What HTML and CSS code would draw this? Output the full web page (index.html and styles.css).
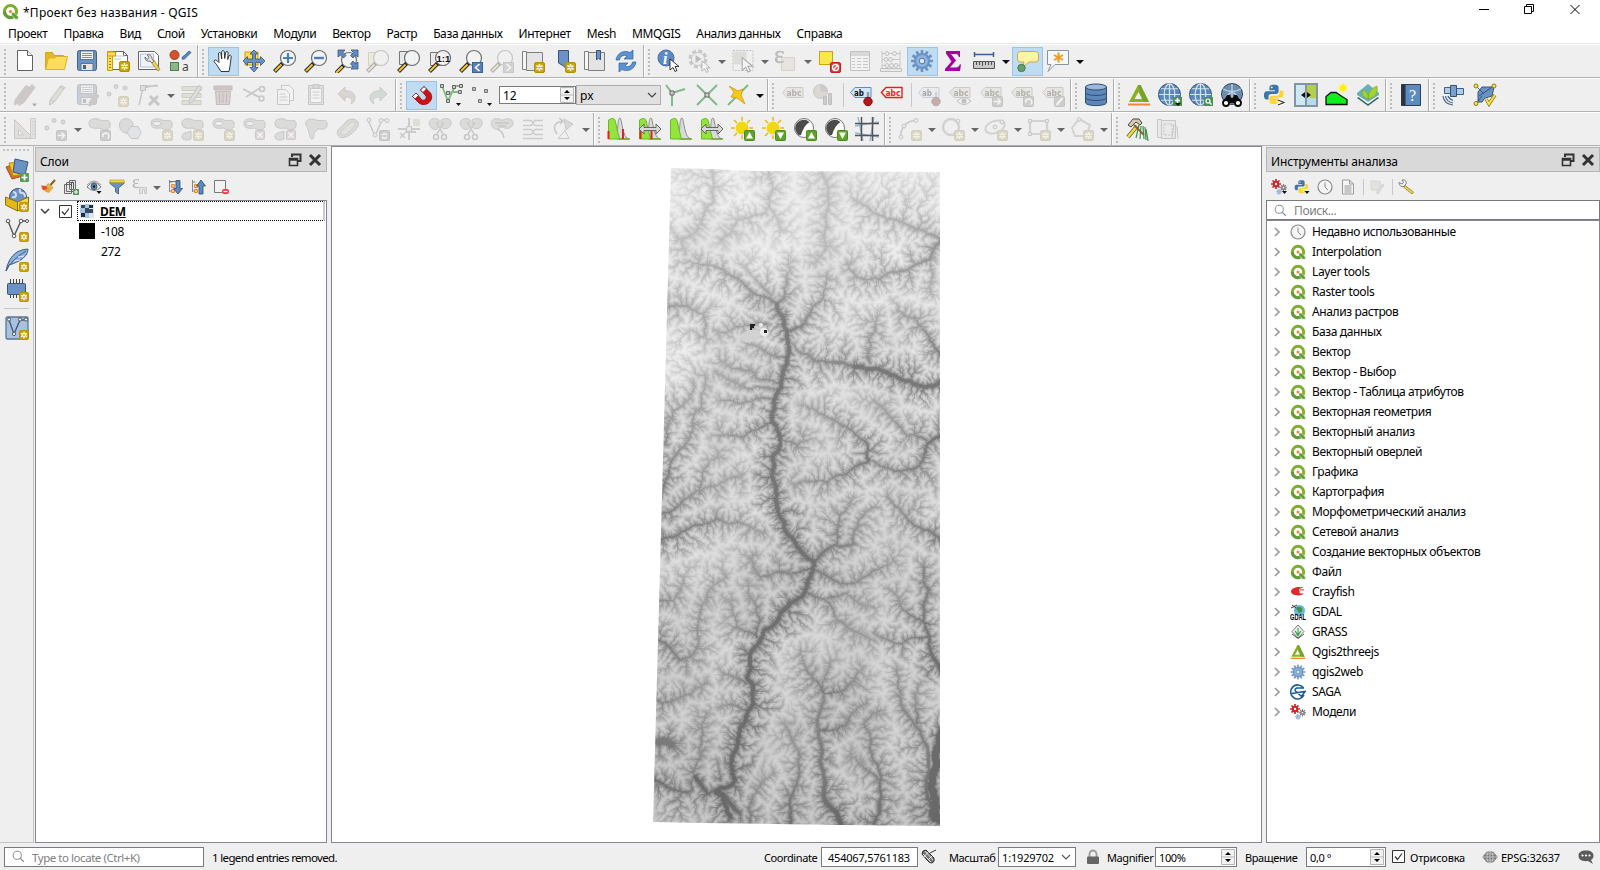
FILE: index.html
```html
<!DOCTYPE html>
<html lang="ru">
<head>
<meta charset="utf-8">
<title>*Проект без названия - QGIS</title>
<link rel="stylesheet" href="styles.css">
</head>
<body>
<svg class="defs">
<symbol id="qgis" viewBox="0 0 16 16"><circle cx="8" cy="8" r="5.700" fill="#fff" stroke="#7fae2c" stroke-width="2.900"/><path d="M2.300 8a5.700 5.700 0 0 0 8 5.200" fill="none" stroke="#619b3a" stroke-width="2.900"/><path d="M9 9h2.300l4 4v2.300h-2.600L9 11.300Z" fill="#5f9e35" stroke="#fff" stroke-width=".5"/><circle cx="8" cy="8" r="1.500" fill="#f08a2c"/></symbol>
<symbol id="new" viewBox="0 0 11 11"><rect x=".5" y=".5" width="10" height="10" rx="1.500" fill="#c9a30a" stroke="#b98f00"/><path d="M5.500 2v7M2.400 3.700l6.200 3.600M8.600 3.700 2.400 7.300" stroke="#fff" stroke-width="1.500"/><circle cx="5.500" cy="5.500" r="1" fill="#c9a30a"/></symbol>
<symbol id="page" viewBox="0 0 24 24"><path d="M4.500 1.500h10l5 5v15h-15Z" fill="#fff" stroke="#636363"/><path d="M14.500 1.500v5h5" fill="#eee" stroke="#636363"/></symbol>
<symbol id="open" viewBox="0 0 24 24"><path d="M1.500 20V3.500h7l2 3h9V20Z" fill="#e7b52a" stroke="#d8a413"/><path d="M1.500 20.500 4.500 9h6l2-1.500h11L20.500 20.500Z" fill="#fcdd5a" stroke="#dcb127"/></symbol>
<symbol id="save" viewBox="0 0 24 24"><rect x="2.500" y="1.500" width="19" height="20" rx="2" fill="#6b92c2" stroke="#40618c"/><rect x="5.500" y="2" width="13" height="8.500" fill="#f4f4f4" stroke="#56789f"/><path d="M7 4.500h10M7 6.500h10M7 8.500h10" stroke="#8c8c8c"/><rect x="6" y="14.500" width="12" height="7" fill="#e6e6e6" stroke="#56789f"/><rect x="8" y="16" width="3" height="4" fill="#3e648f"/></symbol>
<symbol id="layout" viewBox="0 0 24 24"><path d="M2.500 2.500h15l4 4v14h-19Z" fill="#fff" stroke="#636363"/><path d="M17.500 2.500v4h4" fill="none" stroke="#636363"/><path d="M8 7h11M8 10h7" stroke="#b9c6dc"/><path d="M1.500 2.500h5v19h-5Z" fill="#fbdc52" stroke="#c79e10"/><path d="M1.500 3h8v4h-8Z" fill="#fbdc52" stroke="#c79e10"/><path d="M3 9.500h2M3 12.500h2M3 15.500h2M3 18.500h2" stroke="#a58006"/><use href="#new" x="13" y="12" width="11" height="11"/></symbol>
<symbol id="manager" viewBox="0 0 24 24"><path d="M1.500 2.500h16l4 4v14h-20Z" fill="#fff" stroke="#636363"/><path d="M3.500 5h13v13h-13Z" fill="#eff4fb" stroke="#a8c0e0"/><path d="m14 13 7 9 2-1.500-6-9.500Z" fill="#f0d35a" stroke="#9c8125" stroke-width=".8"/><path d="M8 8c0 3 2 5 5 4l2 2 2-2-2-2c0-3-2-5-5-4l2 2-1 2-1 .5Z" fill="#e3e3e3" stroke="#777"/></symbol>
<symbol id="style" viewBox="0 0 24 24"><circle cx="6.500" cy="6" r="4.500" fill="#cf5530" stroke="#a63d1d"/><path d="M14 10c0-3 2-3 3-4l4-4 2 1.500-5 5c-1 1.500-2 2-4 1.500Z" fill="#5a86bd" stroke="#375e90" stroke-width=".8"/><rect x="2.500" y="13.500" width="8" height="8" fill="#8cb58a" stroke="#4c7d4b"/><text x="14" y="22" font-size="12" font-family="Noto Sans" fill="#444">a</text></symbol>
<symbol id="hand" viewBox="0 0 24 24"><path d="M10 22.500 5.500 15.500c-1.700-2-3.300-3-2-4.200 1-.9 3.500 1 4.500 2.200L7.500 5c0-2 2-2 2.400-.4L10.700 10V3c.2-2 2.400-1.900 2.600 0l.4 6.500 1-6c.5-1.700 2.500-1.300 2.400.5L16.700 10.500l1.300-3.500c.8-1.500 2.500-.9 2.200.9L19 17l-1 5.500Z" fill="#fff" stroke="#222" stroke-width=".9"/></symbol>
<symbol id="panto" viewBox="0 0 24 24"><rect x="3" y="3" width="13" height="13" fill="#fbdf43" stroke="#c9a30a"/><path d="m12 1 4 4h-2.500v5h5V7.500L23 12l-4.500 4.500V13.500h-5v5H16L12 23l-4-4.500h2.500v-5h-5v3L1 12l4.500-4.500V10h5V5H8Z" fill="#6b92c2" stroke="#36567f" stroke-width=".8"/></symbol>
<symbol id="lens" viewBox="0 0 24 24"><path d="m10 14-8.500 8.500" stroke="#222" stroke-width="4"/><path d="m8.500 15.500-6.500 6.500" stroke="#f4c62c" stroke-width="2.200"/><circle cx="15" cy="9" r="7.500" fill="#f2f4f4" fill-opacity=".93" stroke="#6f6f6f" stroke-width="1.200"/></symbol>
<symbol id="zin" viewBox="0 0 24 24"><use href="#lens"/><path d="M15 4v10M10 9h10" stroke="#4f7db5" stroke-width="2.200"/></symbol>
<symbol id="zout" viewBox="0 0 24 24"><use href="#lens"/><path d="M10 9h10" stroke="#4f7db5" stroke-width="2.400"/></symbol>
<symbol id="zfull" viewBox="0 0 24 24"><g transform="translate(-1 2)"><use href="#lens" width="24" height="24"/></g><path d="M3 1h7L8 3.500l3 3L8.500 9l-3-3L3 8ZM23 1h-7l2.500 2.500-3 3L18 9l2.500-3L23 8ZM23 20h-7l2.500-2-3-3L18 12l2.500 3 2.500-2Z" fill="#5f8bc0" stroke="#36567f" stroke-width=".8"/></symbol>
<symbol id="zsel" viewBox="0 0 24 24"><rect x="2.500" y="3.500" width="13" height="13" fill="#fbe36a" stroke="#b89a2a"/><use href="#lens"/></symbol>
<symbol id="zlay" viewBox="0 0 24 24"><path d="M2.500 2.500h15v13h-15Z" fill="#e8e8e8" stroke="#777"/><use href="#lens"/></symbol>
<symbol id="znat" viewBox="0 0 24 24"><path d="M2.500 3.500h15v13h-15Z" fill="#e8e8e8" stroke="#777"/><use href="#lens"/><text x="8.500" y="12.500" font-size="9.500" font-weight="700" font-family="Liberation Sans" fill="#111">1:1</text></symbol>
<symbol id="prev" viewBox="0 0 24 24"><use href="#lens"/><rect x="13.500" y="13.500" width="10" height="10" fill="#5482b8" stroke="#3a638f"/><path d="m20.500 15-4 3.500 4 3.500" fill="none" stroke="#fff" stroke-width="1.600"/></symbol>
<symbol id="next" viewBox="0 0 24 24"><use href="#lens"/><rect x="13.500" y="13.500" width="10" height="10" fill="#999" stroke="#777"/><path d="m16.500 15 4 3.500-4 3.500" fill="none" stroke="#fff" stroke-width="1.600"/></symbol>
<symbol id="map" viewBox="0 0 24 24"><path d="M5.500 3.500h16v18h-16Z" fill="#e4e4e4" stroke="#7f7f7f"/><path d="M1.500 2.500h4v18h-4Z" fill="#f6f6f6" stroke="#7f7f7f"/></symbol>
<symbol id="mapnew" viewBox="0 0 24 24"><use href="#map"/><use href="#new" x="13" y="13" width="11" height="11"/></symbol>
<symbol id="bmnew" viewBox="0 0 24 24"><path d="M6.500 1.500h10V22l-5-5-5-3Z" fill="#6b92c2" stroke="#36567f"/><use href="#new" x="13" y="13" width="11" height="11"/></symbol>
<symbol id="bmshow" viewBox="0 0 24 24"><use href="#map"/><path d="M13.500 1.500h4V11l-2-2-2 2Z" fill="#6b92c2" stroke="#36567f"/></symbol>
<symbol id="refresh" viewBox="0 0 24 24"><path d="M2 11C3 4 10 .5 16 3.500L19 1v9h-9l3-3C9 5 6 8 5.500 11ZM22 13c-1 7-8 10.500-14 7.500L5 23v-9h9l-3 3c4 2 7-1 7.500-4Z" fill="#5c92cf" stroke="#2d639f" stroke-width=".7"/></symbol>
<symbol id="cur" viewBox="0 0 12 14"><path d="M1 1v11l3-2.500 2 4 2-1-2-4h4Z" fill="#fff" stroke="#222" stroke-width=".9"/></symbol>
<symbol id="info" viewBox="0 0 24 24"><circle cx="9" cy="9" r="8" fill="#5b8ac4" stroke="#4771a8"/><text x="6" y="15" font-size="16" font-weight="700" font-style="italic" font-family="Liberation Serif" fill="#fff">i</text><use href="#cur" x="12" y="9" width="12" height="14"/></symbol>
<symbol id="cog" viewBox="0 0 24 24"><path d="M12 1v22M2.500 6.500l19 11M2.500 17.500l19-11M6.500 2.500l11 19M17.500 2.500l-11 19M1 12h22" stroke="currentColor" stroke-width="2.600"/><circle cx="12" cy="12" r="7" fill="#8fb3dd" stroke="currentColor" stroke-width="2"/><circle cx="12" cy="12" r="2.800" fill="#dcebfa" stroke="#4f79ad"/></symbol>
<symbol id="action" viewBox="0 0 24 24"><circle cx="10" cy="10" r="8" fill="none" stroke="#777" stroke-width="3" stroke-dasharray="4 2.280"/><circle cx="10" cy="10" r="6.500" fill="#eee" stroke="#777"/><path d="m7.500 6 6 4-6 4Z" fill="#555"/><use href="#cur" x="13" y="11" width="11" height="13"/></symbol>
<symbol id="select" viewBox="0 0 24 24"><rect x="2" y="1.500" width="20" height="20" fill="none" stroke="#666" stroke-dasharray="2 1.300"/><rect x="2.500" y="2.500" width="13" height="13" fill="#c7bb90"/><use href="#cur" x="10" y="7" width="14" height="17"/></symbol>
<symbol id="eps" viewBox="0 0 24 24"><rect x="7.500" y="8.500" width="13" height="13" fill="#ddd2a3" stroke="#a89b6a"/><text x="0" y="14" font-size="25" font-family="Liberation Serif" fill="#555" stroke="#555" stroke-width=".5">ε</text></symbol>
<symbol id="desel" viewBox="0 0 24 24"><rect x="2.500" y="2.500" width="13" height="13" fill="#fde74c" stroke="#c9a30a"/><rect x="13.500" y="13.500" width="10" height="10" rx="1.500" fill="#e03a3a" stroke="#c41d1d"/><circle cx="18.500" cy="18.500" r="3" fill="none" stroke="#fff" stroke-width="1.300"/><path d="m16.500 20.500 4-4" stroke="#fff" stroke-width="1.200"/></symbol>
<symbol id="table" viewBox="0 0 24 24"><path d="M2.500 2.500h19v19h-19Z" fill="#fafafa" stroke="#666"/><path d="M3 3h18v4H3Z" fill="#aaa"/><path d="M4 9.500h3m2 0h4m2 0h5M4 12.500h3m2 0h4m2 0h5M4 15.500h3m2 0h4m2 0h5M4 18.500h3m2 0h4m2 0h5" stroke="#777"/></symbol>
<symbol id="abacus" viewBox="0 0 24 24"><path d="M3 1.500V20M21 1.500V20M3 4.500h18M3 10.500h18M3 16.500h18" fill="none" stroke="#777"/><g fill="#ddd" stroke="#666"><circle cx="8" cy="4.500" r="2"/><circle cx="15.500" cy="4.500" r="2"/><circle cx="7" cy="10.500" r="2"/><circle cx="11.500" cy="10.500" r="2"/><circle cx="8" cy="16.500" r="2"/><circle cx="12.500" cy="16.500" r="2"/><circle cx="17" cy="16.500" r="2"/><path d="M1.500 19.500h21v3h-21Z"/></g></symbol>
<symbol id="sigma" viewBox="0 0 24 24"><path d="M5 2h14v6h-1.200c-.5-2.500-1.500-3-4-3H10l5 6.500L9 18.500h5.500c2.500 0 3.500-.8 4.200-3H20L19 22H4v-2l6.500-7.500L5 4.500Z" fill="#a500a5"/></symbol>
<symbol id="measure" viewBox="0 0 24 24"><path d="M2 5.500h20M2.500 3v5M21.500 3v5" stroke="#3d5f8c" stroke-width="1.500"/><path d="M1.500 12.500h21v7h-21Z" fill="#c9c9c9" stroke="#555"/><path d="M4.500 13v3m3-3v3m3-3v4m3-4v3m3-3v3m3-3v3" stroke="#555"/></symbol>
<symbol id="tip" viewBox="0 0 24 24"><path d="M5.500 2.500h15q3 0 3 3v4.500q0 3-3 3H14l-6 5 1-5H5.500q-3 0-3-3V5.500q0-3 3-3Z" fill="#fff3a6" stroke="#c9a94a"/><circle cx="6.500" cy="19" r="3.700" fill="#65a26b" stroke="#477a4d"/></symbol>
<symbol id="annot" viewBox="0 0 24 24"><path d="M1.500 1.500h21v14H9l-7 7 3-7H1.500Z" fill="#f5f8fc" stroke="#8a949e"/><path d="M12.500 3.500v10M8 6l9 5M17 6l-9 5" stroke="#f39a1b" stroke-width="2"/></symbol>
<symbol id="pencil" viewBox="0 0 24 24"><path d="M17 2.500 21 4.500 10 19.500 5.500 22 6 17Z" fill="#c8b98b" stroke="#777"/><path d="m7 17 3 2M16 4l4 2" stroke="#777"/></symbol>
<symbol id="pencils" viewBox="0 0 24 24"><path d="M13 2.500 17 4.500 6 19.500 1.500 22 2 17Z" fill="#a5776a" stroke="#777"/><path d="m19 1.500 3 3-11 15-5.500 3L7 16Z" fill="#a5776a" stroke="#777"/><path d="m19 20.500h5l-2.500 3Z" fill="#222"/></symbol>
<symbol id="saveedit" viewBox="0 0 24 24"><use href="#save"/><path d="m21 10 3 3-7 9-3 1 .5-4Z" fill="#a5776a" stroke="#777"/></symbol>
<symbol id="dots" viewBox="0 0 24 24"><g fill="#aaa" stroke="#777"><circle cx="3" cy="11" r="2"/><circle cx="10" cy="3.500" r="2"/><circle cx="19" cy="5" r="2"/></g></symbol>
<symbol id="addpt" viewBox="0 0 24 24"><use href="#dots"/><use href="#new" x="12" y="13" width="11" height="11"/></symbol>
<symbol id="vtool" viewBox="0 0 24 24"><path d="M2 22 6 5l14-3M4 3h17" fill="none" stroke="#777" stroke-width="1.500"/><path d="M3.500 2.500h5v5h-5Z" fill="#bbb" stroke="#666"/><path d="m12 22 9-9m-8 0 9 9" stroke="#777" stroke-width="3"/></symbol>
<symbol id="multi" viewBox="0 0 24 24"><path d="M2 3.500h19v4H2Zm0 7h19v4H2Zm0 7h19v4H2Z" fill="#c7be8a" stroke="#8e8751"/><path d="M19 2.500l3 2-9 14-4 2 .5-4Z" fill="#bbb" stroke="#666"/></symbol>
<symbol id="trash" viewBox="0 0 24 24"><path d="M3 3h18v4H3Z" fill="#b86868" stroke="#8a4a4a"/><path d="M4.500 8.500h15l-1 13h-13Z" fill="#ca8e8e" stroke="#8a4a4a"/><path d="M8.500 10v10m3.500-10v10m3.500-10v10" stroke="#8a4a4a"/></symbol>
<symbol id="cut" viewBox="0 0 24 24"><path d="m1 6 16 8M4 14 18 5" stroke="#777" stroke-width="1.600"/><circle cx="20" cy="6" r="2.500" fill="none" stroke="#777" stroke-width="1.500"/><circle cx="19.500" cy="15.500" r="2.500" fill="none" stroke="#777" stroke-width="1.500"/></symbol>
<symbol id="copy" viewBox="0 0 24 24"><path d="M8.500 2.500h8l4 4v11h-12Z" fill="#fafafa" stroke="#777"/><path d="M4.500 6.500h8l4 4v11h-12Z" fill="#fafafa" stroke="#777"/><path d="M6.500 11h6m-6 3h8m-8 3h8" stroke="#888"/></symbol>
<symbol id="paste" viewBox="0 0 24 24"><path d="M4.500 2.500h15v19h-15Z" fill="#c8c0a5" stroke="#777"/><path d="M6.500 5.500h11v14h-11Z" fill="#fff" stroke="#888"/><path d="M9 1.500h6v4H9Z" fill="#aaa" stroke="#777"/><path d="M8.500 9h7m-7 3h7m-7 3h7" stroke="#888"/></symbol>
<symbol id="undo" viewBox="0 0 24 24"><path d="m3 11 7-7v4c11-1 13 9 6 13 2-5 0-7-6-7v4Z" fill="#bba183" stroke="#927a60"/></symbol>
<symbol id="redo" viewBox="0 0 24 24"><path d="m21 11-7-7v4C3 7 1 17 8 21c-2-5 0-7 6-7v4Z" fill="#8fb597" stroke="#6d8f74"/></symbol>
<symbol id="magnet" viewBox="0 0 24 24"><path d="M3.500 13.500 10 20c7 5 16-3 11.500-10L15 3.500 11.500 7l5.500 6c1 2.500-1.500 5-4 4L7 10Z" fill="#d01014" stroke="#8c0b0e" stroke-width=".8"/><path d="M11.500 7 15 3.500 17.500 6 14 9.500ZM3.500 13.500 7 10l2.500 2.500L6 16Z" fill="#fff" stroke="#8c2020" stroke-width=".9"/></symbol>
<symbol id="sv" viewBox="0 0 24 24"><path d="m2 3 6 15 7-15h7M8 10l6-1h8" fill="none" stroke="#80bb87" stroke-width="1.800"/><g fill="#ccc" stroke="#666"><path d="M.5 1.500h3v3h-3Zm12 1h3v3h-3Zm7-1h3v3h-3Zm-13 15h3v3h-3Zm0-8h3v3h-3Zm12-1h3v3h-3Z"/></g><path d="M16 20h5l-2.500 3Z" fill="#111"/></symbol>
<symbol id="sdots" viewBox="0 0 24 24"><g fill="#bbb" stroke="#777"><path d="M1.500 4.500h3v3h-3Zm12 2h3v3h-3Zm-6 10h3v3h-3Z"/></g><path d="M16 20h5l-2.500 3Z" fill="#111"/></symbol>
<symbol id="topo" viewBox="0 0 24 24"><path d="M2 2 8 10l13-4M8 10v13" fill="none" stroke="#80bb87" stroke-width="2"/><path d="M6 8h4v4H6Z" fill="#ccc" stroke="#666"/></symbol>
<symbol id="inter" viewBox="0 0 24 24"><path d="m2 2 20 20M22 2 2 22" stroke="#80bb87" stroke-width="2"/><path d="M10 10h4v4h-4Z" fill="#ccc" stroke="#666"/></symbol>
<symbol id="trace" viewBox="0 0 24 24"><path d="M22 2 2 22" stroke="#80bb87" stroke-width="2"/><path d="m3 3 9 5 5-2-2 6 4 9-8-6-6-1 3-5Z" fill="#f7c91b" stroke="#c99a0a" stroke-width=".8"/></symbol>
<symbol id="abc" viewBox="0 0 24 24"><path d="M1.500 9.500 6 4.500h16v10H6Z" fill="#ded4a5" stroke="#8a8466"/><text x="5.500" y="13" font-size="9" font-weight="700" font-family="DejaVu Sans" fill="#333" textLength="15" lengthAdjust="spacingAndGlyphs">abc</text></symbol>
<symbol id="pie" viewBox="0 0 24 24"><circle cx="8.500" cy="8.500" r="7" fill="#b4ad8c" stroke="#777"/><path d="M8.500 8.500V1.500a7 7 0 0 1 7 7Z" fill="#a77"/><path d="M11.500 13.500h3v8h-3Zm5-3h3v11h-3Z" fill="#789" stroke="#566"/></symbol>
<symbol id="abpin" viewBox="0 0 24 24"><path d="M1.500 9.500 6 4.500h16v10H6Z" fill="#d5e6fb" stroke="#4d92e0"/><text x="5" y="13" font-size="9.500" font-weight="700" font-family="DejaVu Sans" fill="#111" textLength="10" lengthAdjust="spacingAndGlyphs">ab</text><path d="M19 9v7" stroke="#999" stroke-width="2.500"/><circle cx="19" cy="18.500" r="4.200" fill="#b81616" stroke="#7e0c0c"/></symbol>
<symbol id="abcred" viewBox="0 0 24 24"><path d="M1.500 9.500 6 4.500h16v10H6Z" fill="#fff" stroke="#f01818" stroke-width="1.400"/><text x="5.500" y="13" font-size="9" font-weight="700" font-family="DejaVu Sans" fill="#f01818" textLength="15" lengthAdjust="spacingAndGlyphs">abc</text></symbol>
<symbol id="abeye" viewBox="0 0 24 24"><use href="#abc"/><path d="M9 18q7-7 14 0-7 7-14 0Z" fill="#fff" stroke="#555"/><circle cx="16" cy="18" r="2.500" fill="#666"/></symbol>
<symbol id="badge" viewBox="0 0 11 11"><rect x=".5" y=".5" width="10" height="10" rx="1" fill="#8a8a7a" stroke="#6d6d60"/></symbol>
<symbol id="abmove" viewBox="0 0 24 24"><use href="#abc"/><use href="#badge" x="13" y="13" width="11" height="11"/><path d="M14.500 18.500h7m-3-3 3 3-3 3" fill="none" stroke="#fff" stroke-width="1.500"/></symbol>
<symbol id="abrot" viewBox="0 0 24 24"><use href="#abc"/><use href="#badge" x="13" y="13" width="11" height="11"/><path d="M16 20a3 3 0 1 1 4.500 1.500" fill="none" stroke="#fff" stroke-width="1.500"/></symbol>
<symbol id="abedit" viewBox="0 0 24 24"><use href="#abc"/><use href="#badge" x="13" y="13" width="11" height="11"/><path d="m15.500 22 6-7" stroke="#fff" stroke-width="2"/></symbol>
<symbol id="db" viewBox="0 0 24 24"><path d="M1.500 4v16c2 3.500 19 3.500 21 0V4Z" fill="#5d87b8" stroke="#2f4f78"/><ellipse cx="12" cy="4" rx="10.500" ry="3" fill="#9db9da" stroke="#2f4f78"/><path d="M1.500 10c2 3.300 19 3.300 21 0m-21 5c2 3.300 19 3.300 21 0" fill="none" stroke="#2f4f78"/></symbol>
<symbol id="three" viewBox="0 0 24 24"><path d="M11 2h2.500L22 19H2Zm.5 7L7.500 16H15Z" fill="#8ab021" fill-rule="evenodd"/><path d="M11 2h2.500L22 19h-5.500Z" fill="#74a32c"/><path d="M1 21.500h22" stroke="#f0883a" stroke-width="2"/></symbol>
<symbol id="globe" viewBox="0 0 24 24"><circle cx="12" cy="12" r="11.500" fill="#5787bd" stroke="#35567e"/><path d="M12 1v22M1 12h22M3 6h18M3 18h18" stroke="#d6e2ee" stroke-width="1.300"/><ellipse cx="12" cy="12" rx="5.500" ry="11" fill="none" stroke="#d6e2ee" stroke-width="1.300"/></symbol>
<symbol id="globeadd" viewBox="0 0 24 24"><use href="#globe" width="23" height="23"/><rect x="15" y="14" width="9" height="9" fill="#4f8e55"/><path d="M19.500 15v5M17 17.500h5" stroke="#fff" stroke-width="1.600"/><path d="m17 20h6l-3 3Z" fill="#111"/></symbol>
<symbol id="globefind" viewBox="0 0 24 24"><use href="#globe" width="23" height="23"/><rect x="15" y="14" width="9" height="9" fill="#4f8e55"/><circle cx="19" cy="18" r="2" fill="none" stroke="#fff" stroke-width="1.200"/><path d="m20.500 19.500 2 2" stroke="#fff" stroke-width="1.300"/></symbol>
<symbol id="bino" viewBox="0 0 24 24"><circle cx="12" cy="11" r="10.500" fill="#6b8db0" stroke="#29435f"/><path d="M3 6q9 5 18 0M5 16Q12 3 19 16M12 1v13" fill="none" stroke="#bdd0e2" stroke-width="1.400"/><path d="M7 12h3l1 3h2l1-3h3l5 8H2Z" fill="#0b0b0b"/><circle cx="6" cy="20" r="3" fill="#fff" stroke="#0b0b0b" stroke-width="1.800"/><circle cx="18" cy="20" r="3" fill="#fff" stroke="#0b0b0b" stroke-width="1.800"/></symbol>
<symbol id="python" viewBox="0 0 24 24"><path d="M12 2c-4 0-5 1-5 3v3h6v1H4c-2 0-3 2-3 4.500S2 18 4 18h2v-3c0-2 1-3 3-3h5c2 0 3-1 3-3V5c0-2-1-3-5-3Z" fill="#3e74a6"/><path d="M12.500 23c4 0 5-1 5-3v-3h-6v-1h8c2 0 3-2 3-4.500S21.500 8 19.500 8H18v3c0 2-1 3-3 3h-5c-2 0-3 1-3 3v3c0 2 1.500 3 5.500 3Z" fill="#fdd43b"/><circle cx="9.500" cy="4.800" r="1" fill="#fff"/><circle cx="15" cy="20.300" r="1" fill="#fff"/></symbol>
<symbol id="pycon" viewBox="0 0 24 24"><use href="#python" width="22" height="22"/><path d="m15 17 6 2.500-6 2.500" fill="none" stroke="#fff" stroke-width="3"/><path d="m15 17 6 2.500-6 2.500" fill="none" stroke="#333" stroke-width="1.200"/></symbol>
<symbol id="swipe" viewBox="0 0 24 24"><rect x="1" y="1" width="22" height="22" fill="#cfe8f7" stroke="#8594a3" stroke-width="2"/><path d="M13 2h9v20h-9Z" fill="#b7dbe9"/><path d="M13 2h9v13q-8 2-9-6Z" fill="#b4cf4d"/><path d="M12 2v20" stroke="#444" stroke-width="1"/><path d="m7 12 4-3v6Zm10 0-4-3v6Z" fill="#111"/></symbol>
<symbol id="profile" viewBox="0 0 24 24"><path d="M1 21.500v-8l5-4h5l6 4 5 3v5Z" fill="#10ee1c" stroke="#111" stroke-width="1.300"/><circle cx="18" cy="5" r="3" fill="#fff200"/><path d="M18 0v10M13 5h10M14.500 1.500l7 7m0-7-7 7" stroke="#fff200"/></symbol>
<symbol id="leaf" viewBox="0 0 24 24"><path d="m12 7 11 8-11 8L1 15Z" fill="#41616c"/><path d="m12 5 11 8-11 8L1 13Z" fill="#fff"/><path d="m12 1 11 9v2l-11 7-11-7v-2Z" fill="#67b1b6"/><path d="M12 16q-8-3-5-9 6 2 5 9 0-10 9-13 2 11-9 13Z" fill="#a4d233" stroke="#6ea82a" stroke-width=".6"/></symbol>
<symbol id="help" viewBox="0 0 24 24"><path d="M2.500 1.500h19v21h-19Z" fill="#5d8bc0" stroke="#2e3e52"/><path d="M2.500 1.500h4v21h-4Z" fill="#2c3440"/><text x="10" y="18" font-size="16" font-family="Liberation Serif" fill="#fff">?</text></symbol>
<symbol id="sat" viewBox="0 0 24 24"><path d="M2.500 4.500h8v6h-8Zm11 1h8v6h-8Z" fill="#aecbe8" stroke="#3d5f8c"/><path d="M8.500 2.500h6v11h-6Z" fill="#7b9fc9" stroke="#31507a"/><path d="M1 13q1 8 10 9M3.500 13q1 6 7.500 7M6 13q1 3 5 4.500" fill="none" stroke="#46658f" stroke-width="1.200"/></symbol>
<symbol id="topocheck" viewBox="0 0 24 24"><path d="m5 9 4-5h12l-2 9-7 2-3 4H5Z" fill="#6b92c2" stroke="#35567e"/><path d="M3 3l8 8M21 3 6 13M3 21l6-8" fill="none" stroke="#35567e"/><g fill="#fbe24a" stroke="#8a7a10"><circle cx="3" cy="3" r="2"/><circle cx="21" cy="3" r="2"/><circle cx="3" cy="20.500" r="2"/></g><path d="m13 16 3 5 6-9" fill="none" stroke="#8a7a10" stroke-width="3.400"/><path d="m13 16 3 5 6-9" fill="none" stroke="#fbe24a" stroke-width="2"/></symbol>
<symbol id="cad" viewBox="0 0 24 24"><path d="M1.500 2.500v19h19Zm4 10 5 5.500H5.500Z" fill="#ccb8a5" stroke="#8c7b6d" fill-rule="evenodd"/><path d="M17.500 1.500h5v20h-5Z" fill="#d4ccae" stroke="#8c866c"/><path d="M19 5h3m-3 3h3m-3 3h3m-3 3h3m-3 3h3" stroke="#888"/></symbol>
<symbol id="movept" viewBox="0 0 24 24"><use href="#dots"/><use href="#badge" x="12" y="13" width="11" height="11"/><path d="M13.500 18.500h7m-3-3 3 3-3 3" fill="none" stroke="#fff" stroke-width="1.500"/></symbol>
<symbol id="blob" viewBox="0 0 24 24"><path d="M2 6c0-5 8-5 11-3s9-2 10 3c1 6-3 8-8 6-4-2-6 0-9-1-3-.5-4-2-4-5Z" fill="#b5b5aa" stroke="#777"/></symbol>
<symbol id="ring" viewBox="0 0 24 24"><use href="#blob"/><ellipse cx="8" cy="6.500" rx="4" ry="2.200" fill="#efefef" stroke="#777"/></symbol>
<symbol id="rot" viewBox="0 0 24 24"><use href="#blob"/><use href="#badge" x="13" y="13" width="11" height="11"/><path d="M16 20a3 3 0 1 1 4.500 1.500" fill="none" stroke="#fff" stroke-width="1.500"/></symbol>
<symbol id="simpl" viewBox="0 0 24 24"><path d="M1.500 8c0-7 8-8 12-4s0 11-3 12-9-1-9-8Z" fill="#b5b5aa" stroke="#777"/><path d="m13 9.500h7l3 6-3 6h-7l-4-6Z" fill="#c5ccd4" stroke="#777"/></symbol>
<symbol id="ringnew" viewBox="0 0 24 24"><use href="#ring"/><use href="#new" x="13" y="13" width="11" height="11"/></symbol>
<symbol id="partnew" viewBox="0 0 24 24"><use href="#blob"/><path d="M2 20c0-5 5-4 9-6v8c-4 2-9 1-9-2Z" fill="#b5b5aa" stroke="#777"/><use href="#new" x="13" y="13" width="11" height="11"/></symbol>
<symbol id="ringdel" viewBox="0 0 24 24"><use href="#ring"/><rect x="13.500" y="13.500" width="9" height="9" rx="1" fill="#c99" stroke="#a77"/><path d="m15.500 15.500 5 5m0-5-5 5" stroke="#fff" stroke-width="1.500"/></symbol>
<symbol id="partdel" viewBox="0 0 24 24"><use href="#blob"/><path d="M2 20c0-5 5-4 9-6v8c-4 2-9 1-9-2Z" fill="#b5b5aa" stroke="#777"/><rect x="13.500" y="13.500" width="9" height="9" rx="1" fill="#c99" stroke="#a77"/><path d="m15.500 15.500 5 5m0-5-5 5" stroke="#fff" stroke-width="1.500"/></symbol>
<symbol id="reshape" viewBox="0 0 24 24"><path d="M2 8c-2-6 6-7 10-5s10-2 11 3-3 7-7 6-3 3-5 3 0 7-3 7-2-8-6-14Z" fill="#b5b5aa" stroke="#777"/></symbol>
<symbol id="offset" viewBox="0 0 24 24"><path d="M3 18c-3-6 4-7 7-12s11-5 13-1-3 9-7 12-11 6-13 1Z" fill="#b9b29c" stroke="#777"/><path d="M6 17c-1-4 4-5 7-9s6-4 7-2-3 6-6 9-7 4-8 2Z" fill="#c8c6bd" stroke="#888"/></symbol>
<symbol id="vrot" viewBox="0 0 24 24"><path d="m2 3 7 16L16 3h6" fill="none" stroke="#777" stroke-width="1.400"/><g fill="#ddd" stroke="#777"><circle cx="3" cy="3" r="2"/><circle cx="15" cy="3.500" r="2"/><circle cx="21" cy="3.500" r="2"/><circle cx="9" cy="18" r="2"/></g><use href="#badge" x="13" y="13" width="11" height="11"/><path d="M16 18a3 3 0 0 1 5 0m0 2a3 3 0 0 1-5 0" fill="none" stroke="#fff" stroke-width="1.500"/></symbol>
<symbol id="vmulti" viewBox="0 0 24 24"><path d="M12 1v22M1 12h22M8 15h11" fill="none" stroke="#888" stroke-width="2"/><path d="M9.500 9.500h5v5h-5Z" fill="#ddd" stroke="#777"/><path d="M16 2h7v7h-7Z" fill="#c7bb90"/><path d="m3 16 5 5m0-5-5 5" stroke="#a77" stroke-width="1.500"/></symbol>
<symbol id="split" viewBox="0 0 24 24"><path d="M11 3C5-1-1 4 2 9s7 4 9 1ZM13 3c6-3 11-1 10 4s-7 6-10 3Z" fill="#b5b5aa" stroke="#777"/><path d="m8 5 7 12M16 5 9 17" stroke="#888" stroke-width="1.600"/><circle cx="8" cy="20" r="2.500" fill="none" stroke="#777" stroke-width="1.500"/><circle cx="16" cy="20" r="2.500" fill="none" stroke="#777" stroke-width="1.500"/></symbol>
<symbol id="merge" viewBox="0 0 24 24"><path d="M11 3C5-1-1 4 2 9s7 4 9 1h2c4 3 9 1 10-3s-4-7-10-4Z" fill="#b5b5aa" stroke="#777"/><path d="M5 6h14M8 9h8m-9 3q6 2 7 9" fill="none" stroke="#777" stroke-width="1.500"/></symbol>
<symbol id="mattr" viewBox="0 0 24 24"><path d="M2 3.500h8l2 2 2-2h8M2 8.500h8l2-2 2 2h8M2 12.500h8l2 2 2-2h8M2 17.500h8l2-2 2 2h8M2 21.500h20" fill="none" stroke="#888" stroke-width="1.600"/></symbol>
<symbol id="rotpt" viewBox="0 0 24 24"><path d="M5 17Q-2 7 10 4m-3-3 4 3-3 3" fill="none" stroke="#777" stroke-width="1.500"/><path d="m12 2 9 5-7 6Z" fill="#aaa" stroke="#777"/><path d="M6 21.500h11l-4-8Z" fill="none" stroke="#777"/></symbol>
<symbol id="hist" viewBox="0 0 24 24"><path d="M10 22C11 6 11 1 13 1s2 20 9 21Z" fill="#d9d9d9" stroke="#8f8f8f"/><path d="M1.500 22V3q6-4 7 2t4 17Z" fill="#93e43c" stroke="#6bb825"/><path d="M12 22h11" stroke="#6ab02d" stroke-width="1.500"/></symbol>
<symbol id="hist1" viewBox="0 0 24 24"><use href="#hist"/><path d="M1.500 14v8M16 12v10" stroke="#e42020" stroke-width="2"/></symbol>
<symbol id="arr2" viewBox="0 0 24 24"><path d="m1 12 5-5v3.500h12V7l5 5-5 5v-3.500H6V17Z" fill="#d8d8d8" stroke="#666"/></symbol>
<symbol id="hist2" viewBox="0 0 24 24"><use href="#hist"/><path d="M2.500 14v8M13.500 14v8" stroke="#e42020" stroke-width="2"/><use href="#arr2"/></symbol>
<symbol id="hist3" viewBox="0 0 24 24"><use href="#hist"/><use href="#arr2"/></symbol>
<symbol id="up" viewBox="0 0 11 11"><rect x=".5" y=".5" width="10" height="10" rx="1" fill="#60a32b" stroke="#4b8a1d"/><path d="M5.500 2 9 8.500H2Z" fill="#fff"/></symbol>
<symbol id="down" viewBox="0 0 11 11"><rect x=".5" y=".5" width="10" height="10" rx="1" fill="#60a32b" stroke="#4b8a1d"/><path d="M5.500 9 2 2.500h7Z" fill="#fff"/></symbol>
<symbol id="sun" viewBox="0 0 24 24"><path d="M11 0v22M0 11h22M3 3l16 16M19 3 3 19" stroke="#f0b70f" stroke-width="1.500"/><circle cx="11" cy="11" r="6.800" fill="#f1d90c" stroke="#efefef"/></symbol>
<symbol id="sunup" viewBox="0 0 24 24"><use href="#sun"/><use href="#up" x="13" y="13" width="11" height="11"/></symbol>
<symbol id="sundn" viewBox="0 0 24 24"><use href="#sun"/><use href="#down" x="13" y="13" width="11" height="11"/></symbol>
<symbol id="con" viewBox="0 0 24 24"><circle cx="11" cy="11" r="9.500" fill="#fff" stroke="#777"/><path d="M4.700 17.300A8 8 0 0 1 16.500 5.200Q11 8 8 18Q6 18.500 4.700 17.300Z" fill="#4b4b4b"/></symbol>
<symbol id="conup" viewBox="0 0 24 24"><use href="#con"/><use href="#up" x="13" y="13" width="11" height="11"/></symbol>
<symbol id="condn" viewBox="0 0 24 24"><use href="#con"/><use href="#down" x="13" y="13" width="11" height="11"/></symbol>
<symbol id="grid" viewBox="0 0 24 24"><path d="M3 0 8 24M19 0l-4 24M0 9l24-4M0 16l24 4" stroke="#8fb6d6" stroke-width="1.300"/><path d="M6.500 0v24M17.500 0v24M0 6.500h24M0 18.500h24" stroke="#555" stroke-width="1.500"/></symbol>
<symbol id="arc" viewBox="0 0 24 24"><path d="M2.500 20Q3 5 18 3" fill="none" stroke="#777" stroke-width="1.500"/><g fill="#ddd" stroke="#777"><circle cx="3" cy="20" r="2"/><circle cx="6" cy="9" r="2"/><circle cx="18" cy="3.500" r="2"/></g><use href="#new" x="13" y="13" width="11" height="11"/></symbol>
<symbol id="circ" viewBox="0 0 24 24"><circle cx="10" cy="10" r="8" fill="none" stroke="#999" stroke-width="2.500"/><circle cx="17" cy="4" r="1.800" fill="#ddd" stroke="#777"/><use href="#new" x="13" y="13" width="11" height="11"/></symbol>
<symbol id="ell" viewBox="0 0 24 24"><ellipse cx="11" cy="10" rx="10" ry="6" transform="rotate(-20 11 10)" fill="none" stroke="#999" stroke-width="2"/><circle cx="11" cy="10" r="2" fill="#ddd" stroke="#777"/><circle cx="18" cy="5" r="2" fill="#ddd" stroke="#777"/><use href="#new" x="13" y="13" width="11" height="11"/></symbol>
<symbol id="rectn" viewBox="0 0 24 24"><path d="M3 4h17v13H3Z" fill="none" stroke="#999" stroke-width="2.200"/><g fill="#ddd" stroke="#777"><path d="M1.500 2.500h3v3h-3Zm17 0h3v3h-3Zm-17 13h3v3h-3Z"/></g><use href="#new" x="13" y="13" width="11" height="11"/></symbol>
<symbol id="poly" viewBox="0 0 24 24"><path d="m9 2 11 6-4 11H5L2 11Z" fill="none" stroke="#999" stroke-width="2"/><circle cx="9" cy="2.500" r="1.800" fill="#ddd" stroke="#777"/><use href="#new" x="13" y="13" width="11" height="11"/></symbol>
<symbol id="grass" viewBox="0 0 24 24"><path d="M11 21 14 8m1 14 1-13m3 13-1-13m3 14-1-13m3 14-2-12" stroke="#3f8f4c" stroke-width="1.200"/><path d="m3 20 9-11" stroke="#555" stroke-width="4"/><path d="m3 20 9-11" stroke="#f5e028" stroke-width="2.600"/><path d="M3 8 8 2l6 0 3 4-2 2-4-3-5 5Z" fill="#d9c9b0" stroke="#444"/><path d="m9 8 10 10" stroke="#8d6230" stroke-width="2"/></symbol>
<symbol id="grassreg" viewBox="0 0 24 24"><path d="M5.500 3.500h14v18h-14ZM1.500 2.500h4v18h-4Z" fill="#ddd" stroke="#777"/><rect x="8" y="7" width="8" height="11" fill="none" stroke="#777" stroke-dasharray="2 1"/><path d="m16 21 2-14m1 15 1-14m2 14-1-12" stroke="#777"/></symbol>
<symbol id="dsm" viewBox="0 0 24 24"><path d="m1 9 6 12 11-3L14 4Z" fill="#d3702b" stroke="#a94f12"/><path d="m4 5 4 13 11-2-2-12Z" fill="#f6c729" stroke="#b98f00"/><path d="m10 1 13 3-3 13-12-3Z" fill="#6b92c2" stroke="#36567f"/><rect x="15" y="15" width="9" height="9" rx="1" fill="#5b9a5e"/><path d="M19.500 16.500v6m-3-3h6" stroke="#fff" stroke-width="1.700"/></symbol>
<symbol id="gpkg" viewBox="0 0 24 24"><circle cx="13" cy="9" r="8.500" fill="#6b92c2" stroke="#36567f"/><path d="M8 4q3 0 3 3t-4 2m8-8q-1 4 2 4t3 4" fill="none" stroke="#cfdff0" stroke-width="2"/><path d="m.500 9 12 5v9l-12-6Z" fill="#e3b91a" stroke="#8e7008"/><path d="m12.500 14 11-5v8l-11 6Z" fill="#f7d64a" stroke="#8e7008"/><use href="#new" x="14" y="14" width="10" height="10"/></symbol>
<symbol id="shp" viewBox="0 0 24 24"><path d="m3 3 6 15L16 3h6" fill="none" stroke="#555" stroke-width="1.400"/><g fill="#fff" stroke="#555"><circle cx="3" cy="3" r="1.800"/><circle cx="16" cy="3" r="1.800"/><circle cx="22" cy="3" r="1.500"/><circle cx="9" cy="18" r="1.800"/></g><use href="#new" x="14" y="14" width="10" height="10"/></symbol>
<symbol id="feather" viewBox="0 0 24 24"><path d="M1 23Q3 10 12 4 18 1 23 1q0 7-9 12-6 3-10 4Z" fill="#8fb0d6" stroke="#3d5f8c"/><path d="M1 23Q6 12 21 3" fill="none" stroke="#3d5f8c"/><path d="m9 13 6-1M13 9l6-1" stroke="#dfe9f4"/><use href="#new" x="14" y="14" width="10" height="10"/></symbol>
<symbol id="chip" viewBox="0 0 24 24"><path d="M5.500 1v5m3-5v5m3-5v5m3-5v5m3-5v5M5.500 15v5m3-5v5m3-5v5m3-5v5" stroke="#444"/><rect x="2.500" y="5.500" width="18" height="11" rx="1" fill="#6b92c2" stroke="#36567f"/><use href="#new" x="14" y="14" width="10" height="10"/></symbol>
<symbol id="virt" viewBox="0 0 24 24"><rect x="1" y="1" width="22" height="22" rx="1.500" fill="#a9c0de" stroke="#56779f" stroke-width="1.300"/><path d="m4 4 5 14 6-14h6" fill="none" stroke="#3c5876" stroke-width="1.300"/><g fill="#fff" stroke="#555"><circle cx="4" cy="3.500" r="1.600"/><circle cx="15" cy="3.500" r="1.600"/><circle cx="21" cy="3.500" r="1.600"/><circle cx="9" cy="18" r="1.600"/></g><use href="#new" x="14" y="14" width="10" height="10"/></symbol>
<symbol id="brush" viewBox="0 0 16 16"><path d="m15 1-4.500 5" stroke="#8b5a1e" stroke-width="2"/><path d="m8 4.500 5 4-1.500 2-5-4Z" fill="#e7c24c" stroke="#9a7324" stroke-width=".5"/><path d="M1 9l5.500-2.500 5 4L9 14l-3-1Z" fill="#f2a33a"/><path d="M1 6.500l5 .5 1.500 3L3 11Z" fill="#e04a3a"/></symbol>
<symbol id="group" viewBox="0 0 16 16"><path d="M1.500 5.500h7v9h-7Z M3.500 3.500h7v9h-7Z M6.500 1.500h6v9h-6Z" fill="#e9e9e9" stroke="#6a6a6a"/><path d="M8.500 8V4a1 1 0 0 1 2 0v5" fill="none" stroke="#555"/><rect x="10" y="10" width="6" height="6" fill="#58985c"/><path d="M13 11v4m-2-2h4" stroke="#fff"/></symbol>
<symbol id="eye" viewBox="0 0 16 16"><path d="M1 8q7-9 14 0-7 7-14 0Z" fill="#f0f0f0" stroke="#777"/><path d="M1 6q7-8 14 0" fill="none" stroke="#999"/><circle cx="8" cy="7.500" r="3" fill="#6b92c2" stroke="#334e70"/><circle cx="8" cy="7.500" r="1.200" fill="#111"/><path d="M10.500 12h5l-2.500 3Z" fill="#111"/></symbol>
<symbol id="funnel" viewBox="0 0 16 16"><path d="M1 2.500h14v2L9.500 9v6l-3-2V9L1 4.500Z" fill="#6b92c2" stroke="#36567f" stroke-width=".8"/><path d="M1 1h14v2.500H1Z" fill="#f2d73f" stroke="#b89e1d" stroke-width=".7"/></symbol>
<symbol id="epsf" viewBox="0 0 16 16"><text x="0" y="9" font-size="18" font-family="Liberation Serif" fill="#333">ε</text><path d="M7.500 8.500h7v6h-2v-4h-2v4h-3Z" fill="#ccc" stroke="#777"/></symbol>
<symbol id="expand" viewBox="0 0 16 16"><path d="M2.500 1v12M2.500 3h3m-3 9h3" stroke="#888"/><path d="M4.500 5.500h3v3h-3Zm0 5h3v3h-3Z" fill="#f7c88d" stroke="#ee8c1c"/><path d="M2 2.500h10" stroke="#777"/><path d="M9 1.500h4v8h2.500L11 15 6.500 9.500H9Z" fill="#5e89bc" stroke="#2c4d76" stroke-width=".8"/></symbol>
<symbol id="collapse" viewBox="0 0 16 16"><path d="M2.500 1v12M2.500 3h3m-3 9h3" stroke="#888"/><path d="M4.500 5.500h3v3h-3Zm0 5h3v3h-3Z" fill="#f7c88d" stroke="#ee8c1c"/><path d="M9 15h4V7h2.500L11 1 6.500 7H9Z" fill="#5e89bc" stroke="#2c4d76" stroke-width=".8"/></symbol>
<symbol id="remove" viewBox="0 0 16 16"><path d="M1.500 1.500h11v12h-11Z" fill="#f2f2f2" stroke="#777"/><rect x="9" y="10" width="7" height="5" rx="2" fill="#e43f43"/><path d="M10.500 12.500h4" stroke="#fff" stroke-width="1.300"/></symbol>
<symbol id="gears" viewBox="0 0 16 16"><path d="M5 0v10M0 5h10M1.500 1.500l7 7m0-7-7 7" stroke="#cc2525" stroke-width="1.700"/><circle cx="5" cy="5" r="3.200" fill="#cc2525"/><circle cx="5" cy="5" r="1.200" fill="#fff"/><path d="M12.500 5v7.500M9 8.700h7M10 6.200l5 5m0-5-5 5" stroke="#777" stroke-width="1.100"/><circle cx="12.500" cy="8.700" r="2.200" fill="#777"/><circle cx="12.500" cy="8.700" r=".9" fill="#fff"/><path d="M8 9.800v6M5 12.800h6M6 10.800l4 4m0-4-4 4" stroke="#9fb9e0" stroke-width="1.100"/><circle cx="8" cy="12.800" r="1.900" fill="#9fb9e0"/></symbol>
<symbol id="gearsm" viewBox="0 0 16 16"><use href="#gears"/><path d="M11 12h5l-2.500 3Z" fill="#111"/></symbol>
<symbol id="pym" viewBox="0 0 16 16"><use href="#python" width="15" height="15"/><path d="M10.500 12h5l-2.500 3Z" fill="#111"/></symbol>
<symbol id="clock" viewBox="0 0 16 16"><circle cx="8" cy="8" r="7" fill="#f5f5f5" stroke="#8a8a8a" stroke-width="1.200"/><path d="M8 3.500V8l3 3" fill="none" stroke="#888"/></symbol>
<symbol id="doc" viewBox="0 0 16 16"><path d="M2.500 1h7l4 4v10h-11Z" fill="#f5f5f5" stroke="#999"/><path d="M9.500 1v4h4M4.500 7h7m-7 2h7m-7 2h7m-7 2h7" fill="none" stroke="#999"/></symbol>
<symbol id="modedit" viewBox="0 0 16 16"><path d="M2 2h9v9H2Z" fill="#d0c9ae" stroke="#aaa58c"/><path d="m13 5 2 1-5 8-2 1 0-3Z" fill="#bbb" stroke="#999"/></symbol>
<symbol id="wrench" viewBox="0 0 16 16"><path d="M7 6.500 15.500 13l-1.500 2L6 8.500Z" fill="#eed34c" stroke="#93802c" stroke-width=".8"/><path d="M1 3.500l3 1.500 1.500-1.500L4 1c3-1 5 2 4 4L6 7.500C3 8.500 1 6 1 3.500Z" fill="#eee" stroke="#777" stroke-width=".9"/></symbol>
<symbol id="raster" viewBox="0 0 14 14"><path d="M0 0h14v14H0Z" fill="#dce6f0"/><path d="M1 1h4v3H1Zm8 4h4v4H9ZM5 4h4v5H5Z" fill="#34495e"/><path d="M5 0h4v4H5ZM0 4h5v5H0Zm5 5h4v5H5Z" fill="#a9c2dd"/><path d="M1 9h4v4H1Zm8-8h4v3H9Z" fill="#1f2f42"/></symbol>
<symbol id="cray" viewBox="0 0 16 16"><path d="M1 7.500C1.500 3.500 8 2 14 3.500L10 4.500Q8 6 10 7l-1 1 1.500 1.500 3.500 0C11 12.500 1.500 12 1 7.500Z" fill="#e3262b"/><path d="m10 5.800 4 .2" stroke="#e3262b"/></symbol>
<symbol id="gdal" viewBox="0 0 16 16"><circle cx="9.500" cy="6.500" r="5.500" fill="#5fb9df"/><path d="M7 3q4-1 5 2t-3 4q-1-3-3-4Z" fill="#4f8b3c"/><path d="M1 4 7 1M2 1l4 3" stroke="#333"/><text x="0" y="15.500" font-size="8.500" font-weight="700" font-family="Liberation Sans" textLength="16" lengthAdjust="spacingAndGlyphs">GDAL</text></symbol>
<symbol id="gr" viewBox="0 0 16 16"><path d="m8 1 6 6.500-6 6.500-6-6.500Z" fill="#f3f3f3" stroke="#777"/><path d="m2 10 6 4.500 6-4.500" fill="none" stroke="#555"/><path d="M8 12Q6 8 5 7m3 5V4m0 8q1-3 3-5" fill="none" stroke="#35a046" stroke-width="1.100"/></symbol>
<symbol id="saga" viewBox="0 0 16 16"><path d="M13.500 4A7 7 0 1 0 14 11" fill="none" stroke="#175a9b" stroke-width="1.600"/><path d="M14 4H7Q4 5 5.500 7L11 12M2 9.500l13-2-4 5.500" fill="none" stroke="#175a9b" stroke-width="1.500"/></symbol>
<symbol id="mag" viewBox="0 0 16 16"><circle cx="6.500" cy="6.500" r="5" fill="none" stroke="#888" stroke-width="1.200"/><path d="m10 10 4.500 4.500" stroke="#888" stroke-width="1.500"/></symbol>
<symbol id="float" viewBox="0 0 14 14"><path d="M4 4V1.500h8.500V8H10" fill="none" stroke="#333" stroke-width="2"/><path d="M1.500 5.500h8v7h-8Z" fill="none" stroke="#333" stroke-width="1.600"/><path d="M1 6.500h9" stroke="#333" stroke-width="2.500"/></symbol>
<symbol id="close" viewBox="0 0 14 14"><path d="m2 2 10 10M12 2 2 12" stroke="#333" stroke-width="3"/></symbol>
<symbol id="chev" viewBox="0 0 10 10"><path d="m3 1 4 4-4 4" fill="none" stroke="#9a9a9a" stroke-width="1.700"/></symbol>
<symbol id="mouse" viewBox="0 0 16 16"><path d="M1 5q0-4 4-4l4 4 4 4q1 4-2 5-3 0-5-3Z" fill="#777" stroke="#333"/><path d="M4 2l8 9M2 5l8 8M3 8l5-6M7 11l4-4" stroke="#eee" stroke-width=".9"/><path d="m9 4 6-3" stroke="#333"/></symbol>
<symbol id="lock" viewBox="0 0 14 16"><path d="M3.500 8V5a3.500 3.500 0 0 1 7 0v3" fill="none" stroke="#999" stroke-width="1.800"/><rect x="1" y="7.500" width="12" height="7.500" rx="1" fill="#666"/></symbol>
<symbol id="crs" viewBox="0 0 16 16"><path d="m0 8 4-4.500h8L16 8l-4 4.500H4Z" fill="#999"/><circle cx="8" cy="8" r="6" fill="#777"/><path d="M8 1v14M0 8h16M3 5h10M3 11h10" stroke="#ddd" stroke-width=".7"/><ellipse cx="8" cy="8" rx="3" ry="6" fill="none" stroke="#ddd" stroke-width=".7"/></symbol>
<symbol id="msg" viewBox="0 0 16 16"><path d="M8 1.500c5 0 7.500 2 7.500 5.200 0 2-1 3.500-2.500 4.300L15 15l-5-3c-6 .7-9.500-1.500-9.500-5.300C.5 3.500 3 1.500 8 1.500Z" fill="#5c5c5c"/><circle cx="4.500" cy="6.500" r="1.100" fill="#fff"/><circle cx="8" cy="6.500" r="1.100" fill="#fff"/><circle cx="11.500" cy="6.500" r="1.100" fill="#fff"/></symbol>
<symbol id="dd" viewBox="0 0 12 29"><path d="M2 13h8l-4 4Z" fill="currentColor"/></symbol>
</svg>

<header class="titlebar">
  <svg class="logo"><use href="#qgis"/></svg><span class="title">*Проект без названия - QGIS</span>
  <svg class="wctl" viewBox="0 0 112 12"><path d="M0 5.500h10" stroke="#000"/><path d="M45.500 2.500h7v7h-7ZM47.500 2.500v-2h7v7h-2M91.500 1l9 9M100.500 1l-9 9" fill="none" stroke="#000"/></svg>
</header>
<nav class="menubar"><span>Проект</span><span>Правка</span><span>Вид</span><span>Слой</span><span>Установки</span><span>Модули</span><span>Вектор</span><span>Растр</span><span>База данных</span><span>Интернет</span><span>Mesh</span><span>MMQGIS</span><span>Анализ данных</span><span>Справка</span></nav>

<div class="bars">
<div class="row">
  <div class="tb t1"><i class="grip"></i><svg class="i"><use href="#page"/></svg><svg class="i"><use href="#open"/></svg><svg class="i"><use href="#save"/></svg><svg class="i"><use href="#layout"/></svg><svg class="i"><use href="#manager"/></svg><svg class="i"><use href="#style"/></svg></div>
  <div class="tb"><i class="grip"></i><svg class="i on"><use href="#hand"/></svg><svg class="i"><use href="#panto"/></svg><svg class="i"><use href="#zin"/></svg><svg class="i"><use href="#zout"/></svg><svg class="i"><use href="#zfull"/></svg><svg class="i off"><use href="#zsel"/></svg><svg class="i"><use href="#zlay"/></svg><svg class="i"><use href="#znat"/></svg><svg class="i"><use href="#prev"/></svg><svg class="i off"><use href="#next"/></svg><svg class="i"><use href="#mapnew"/></svg><svg class="i"><use href="#bmnew"/></svg><svg class="i"><use href="#bmshow"/></svg><svg class="i"><use href="#refresh"/></svg></div>
  <div class="tb last"><i class="grip"></i><svg class="i"><use href="#info"/></svg><svg class="i off"><use href="#action"/></svg><svg class="d dim"><use href="#dd"/></svg><svg class="i off"><use href="#select"/></svg><svg class="d dim"><use href="#dd"/></svg><svg class="i off"><use href="#eps"/></svg><svg class="d dim"><use href="#dd"/></svg><svg class="i"><use href="#desel"/></svg><svg class="i off"><use href="#table"/></svg><svg class="i off"><use href="#abacus"/></svg><svg class="i on blue"><use href="#cog"/></svg><svg class="i"><use href="#sigma"/></svg><svg class="i"><use href="#measure"/></svg><svg class="d"><use href="#dd"/></svg><svg class="i on"><use href="#tip"/></svg><svg class="i"><use href="#annot"/></svg><svg class="d"><use href="#dd"/></svg></div>
</div>
<div class="row">
  <div class="tb t2"><i class="grip"></i><svg class="i off"><use href="#pencils"/></svg><svg class="i off"><use href="#pencil"/></svg><svg class="i off"><use href="#saveedit"/></svg><svg class="i off"><use href="#addpt"/></svg><svg class="i off"><use href="#vtool"/></svg><svg class="d dim"><use href="#dd"/></svg><svg class="i off"><use href="#multi"/></svg><svg class="i off"><use href="#trash"/></svg><svg class="i off"><use href="#cut"/></svg><svg class="i off"><use href="#copy"/></svg><svg class="i off"><use href="#paste"/></svg><svg class="i off"><use href="#undo"/></svg><svg class="i off"><use href="#redo"/></svg></div>
  <div class="tb t3"><i class="grip"></i><svg class="i on"><use href="#magnet"/></svg><svg class="i"><use href="#sv"/></svg><svg class="i"><use href="#sdots"/></svg><div class="spin tol"><span>12</span><svg class="arrows" viewBox="0 0 14 16"><path d="M.5.5h13v15H.5ZM1 8h12" fill="#f2f2f2" stroke="#b5b5b5"/><path d="m4 6 3-3 3 3ZM4 10l3 3 3-3Z"/></svg></div><div class="combo unit"><span>px</span><svg viewBox="0 0 10 6"><path d="m1 1 4 4 4-4" fill="none" stroke="#444" stroke-width="1.200"/></svg></div><svg class="i"><use href="#topo"/></svg><svg class="i"><use href="#inter"/></svg><svg class="i"><use href="#trace"/></svg><svg class="d"><use href="#dd"/></svg></div>
  <div class="tb"><i class="grip"></i><svg class="i off"><use href="#abc"/></svg><svg class="i off"><use href="#pie"/></svg><i class="sep"></i><svg class="i"><use href="#abpin"/></svg><svg class="i"><use href="#abcred"/></svg><i class="sep"></i><svg class="i off"><use href="#abpin"/></svg><svg class="i off"><use href="#abeye"/></svg><svg class="i off"><use href="#abmove"/></svg><svg class="i off"><use href="#abrot"/></svg><svg class="i off"><use href="#abedit"/></svg></div>
  <div class="tb"><i class="grip"></i><svg class="i"><use href="#db"/></svg></div>
  <div class="tb"><i class="grip"></i><svg class="i"><use href="#three"/></svg><svg class="i"><use href="#globeadd"/></svg><svg class="i"><use href="#globefind"/></svg><svg class="i"><use href="#bino"/></svg></div>
  <div class="tb"><i class="grip"></i><svg class="i"><use href="#pycon"/></svg><svg class="i"><use href="#swipe"/></svg><svg class="i"><use href="#profile"/></svg><svg class="i"><use href="#leaf"/></svg></div>
  <div class="tb"><i class="grip"></i><svg class="i"><use href="#help"/></svg></div>
  <div class="tb last"><i class="grip"></i><svg class="i"><use href="#sat"/></svg><svg class="i"><use href="#topocheck"/></svg></div>
</div>
<div class="row">
  <div class="tb t4"><i class="grip"></i><svg class="i off"><use href="#cad"/></svg><svg class="i off"><use href="#movept"/></svg><svg class="d dim"><use href="#dd"/></svg><svg class="i off"><use href="#rot"/></svg><svg class="i off"><use href="#simpl"/></svg><svg class="i off"><use href="#ringnew"/></svg><svg class="i off"><use href="#partnew"/></svg><svg class="i off"><use href="#ringnew"/></svg><svg class="i off"><use href="#ringdel"/></svg><svg class="i off"><use href="#partdel"/></svg><svg class="i off"><use href="#reshape"/></svg><svg class="i off"><use href="#offset"/></svg><svg class="i off"><use href="#vrot"/></svg><svg class="i off"><use href="#vmulti"/></svg><svg class="i off"><use href="#split"/></svg><svg class="i off"><use href="#split"/></svg><svg class="i off"><use href="#merge"/></svg><svg class="i off"><use href="#mattr"/></svg><svg class="i off"><use href="#rotpt"/></svg><svg class="d dim"><use href="#dd"/></svg></div>
  <div class="tb"><i class="grip"></i><svg class="i"><use href="#hist1"/></svg><svg class="i"><use href="#hist2"/></svg><svg class="i"><use href="#hist"/></svg><svg class="i"><use href="#hist3"/></svg><svg class="i"><use href="#sunup"/></svg><svg class="i"><use href="#sundn"/></svg><svg class="i"><use href="#conup"/></svg><svg class="i"><use href="#condn"/></svg><svg class="i"><use href="#grid"/></svg></div>
  <div class="tb t5"><i class="grip"></i><svg class="i off"><use href="#arc"/></svg><svg class="d dim"><use href="#dd"/></svg><svg class="i off"><use href="#circ"/></svg><svg class="d dim"><use href="#dd"/></svg><svg class="i off"><use href="#ell"/></svg><svg class="d dim"><use href="#dd"/></svg><svg class="i off"><use href="#rectn"/></svg><svg class="d dim"><use href="#dd"/></svg><svg class="i off"><use href="#poly"/></svg><svg class="d dim"><use href="#dd"/></svg></div>
  <div class="tb last"><i class="grip"></i><svg class="i"><use href="#grass"/></svg><svg class="i off"><use href="#grassreg"/></svg></div>
</div>
</div>

<main class="work">
  <aside class="side"><i class="hgrip"></i><svg><use href="#dsm"/></svg><svg><use href="#gpkg"/></svg><svg><use href="#shp"/></svg><svg><use href="#feather"/></svg><svg><use href="#chip"/></svg><i class="hsep"></i><svg><use href="#virt"/></svg></aside>
  <section class="panel layers">
    <div class="ptitle"><span>Слои</span><svg><use href="#float"/></svg><svg><use href="#close"/></svg></div>
    <div class="ptools"><svg><use href="#brush"/></svg><svg><use href="#group"/></svg><svg><use href="#eye"/></svg><svg><use href="#funnel"/></svg><svg class="off"><use href="#epsf"/></svg><svg class="d dim small"><use href="#dd"/></svg><svg><use href="#expand"/></svg><svg><use href="#collapse"/></svg><svg><use href="#remove"/></svg></div>
    <div class="tree">
      <div class="layer"><svg class="tw" viewBox="0 0 10 6"><path d="m1 1 4 4 4-4" fill="none" stroke="#444" stroke-width="1.600"/></svg><svg class="cb" viewBox="0 0 13 13"><path d="M.5.5h12v12H.5Z" fill="#fff" stroke="#333"/><path d="m3 6.500 2.500 3 4.500-6" fill="none" stroke="#333" stroke-width="1.200"/></svg><div class="focus"><svg class="ras"><use href="#raster"/></svg><b>DEM</b></div></div>
      <div class="leg"><i class="black"></i><span>-108</span></div>
      <div class="leg"><i></i><span>272</span></div>
    </div>
  </section>
  <section class="map"><canvas class="dem" id="dem" width="287" height="658"></canvas></section>
  <section class="panel tools">
    <div class="ptitle"><span>Инструменты анализа</span><svg><use href="#float"/></svg><svg><use href="#close"/></svg></div>
    <div class="ptools"><svg><use href="#gearsm"/></svg><svg><use href="#pym"/></svg><svg><use href="#clock"/></svg><svg><use href="#doc"/></svg><i class="sep"></i><svg class="off"><use href="#modedit"/></svg><i class="sep"></i><svg><use href="#wrench"/></svg></div>
    <div class="find"><svg><use href="#mag"/></svg><span>Поиск...</span></div>
    <ul class="algs">
      <li><svg class="c"><use href="#chev"/></svg><svg><use href="#clock"/></svg><span>Недавно использованные</span></li>
      <li><svg class="c"><use href="#chev"/></svg><svg><use href="#qgis"/></svg><span>Interpolation</span></li>
      <li><svg class="c"><use href="#chev"/></svg><svg><use href="#qgis"/></svg><span>Layer tools</span></li>
      <li><svg class="c"><use href="#chev"/></svg><svg><use href="#qgis"/></svg><span>Raster tools</span></li>
      <li><svg class="c"><use href="#chev"/></svg><svg><use href="#qgis"/></svg><span>Анализ растров</span></li>
      <li><svg class="c"><use href="#chev"/></svg><svg><use href="#qgis"/></svg><span>База данных</span></li>
      <li><svg class="c"><use href="#chev"/></svg><svg><use href="#qgis"/></svg><span>Вектор</span></li>
      <li><svg class="c"><use href="#chev"/></svg><svg><use href="#qgis"/></svg><span>Вектор - Выбор</span></li>
      <li><svg class="c"><use href="#chev"/></svg><svg><use href="#qgis"/></svg><span>Вектор - Таблица атрибутов</span></li>
      <li><svg class="c"><use href="#chev"/></svg><svg><use href="#qgis"/></svg><span>Векторная геометрия</span></li>
      <li><svg class="c"><use href="#chev"/></svg><svg><use href="#qgis"/></svg><span>Векторный анализ</span></li>
      <li><svg class="c"><use href="#chev"/></svg><svg><use href="#qgis"/></svg><span>Векторный оверлей</span></li>
      <li><svg class="c"><use href="#chev"/></svg><svg><use href="#qgis"/></svg><span>Графика</span></li>
      <li><svg class="c"><use href="#chev"/></svg><svg><use href="#qgis"/></svg><span>Картография</span></li>
      <li><svg class="c"><use href="#chev"/></svg><svg><use href="#qgis"/></svg><span>Морфометрический анализ</span></li>
      <li><svg class="c"><use href="#chev"/></svg><svg><use href="#qgis"/></svg><span>Сетевой анализ</span></li>
      <li><svg class="c"><use href="#chev"/></svg><svg><use href="#qgis"/></svg><span>Создание векторных объектов</span></li>
      <li><svg class="c"><use href="#chev"/></svg><svg><use href="#qgis"/></svg><span>Файл</span></li>
      <li><svg class="c"><use href="#chev"/></svg><svg><use href="#cray"/></svg><span>Crayfish</span></li>
      <li><svg class="c"><use href="#chev"/></svg><svg><use href="#gdal"/></svg><span>GDAL</span></li>
      <li><svg class="c"><use href="#chev"/></svg><svg><use href="#gr"/></svg><span>GRASS</span></li>
      <li><svg class="c"><use href="#chev"/></svg><svg><use href="#three"/></svg><span>Qgis2threejs</span></li>
      <li><svg class="c"><use href="#chev"/></svg><svg class="blue"><use href="#cog"/></svg><span>qgis2web</span></li>
      <li><svg class="c"><use href="#chev"/></svg><svg><use href="#saga"/></svg><span>SAGA</span></li>
      <li><svg class="c"><use href="#chev"/></svg><svg><use href="#gears"/></svg><span>Модели</span></li>
    </ul>
  </section>
</main>

<footer class="status">
  <div class="find locate"><svg><use href="#mag"/></svg><span>Type to locate (Ctrl+K)</span></div>
  <span class="msgtext">1 legend entries removed.</span>
  <span class="lab l1">Coordinate</span><div class="spin f1"><span>454067,5761183</span></div><svg class="si"><use href="#mouse"/></svg>
  <span class="lab l2">Масштаб</span><div class="spin f2"><span>1:1929702</span><svg class="cv" viewBox="0 0 10 6"><path d="m1 1 4 4 4-4" fill="none" stroke="#555" stroke-width="1.100"/></svg></div><svg class="si lk"><use href="#lock"/></svg>
  <span class="lab l3">Magnifier</span><div class="spin f3"><span>100%</span><svg class="arrows" viewBox="0 0 14 16"><path d="M.5.5h13v15H.5ZM1 8h12" fill="#f2f2f2" stroke="#b5b5b5"/><path d="m4 6 3-3 3 3ZM4 10l3 3 3-3Z"/></svg></div>
  <span class="lab l4">Вращение</span><div class="spin f4"><span>0,0 °</span><svg class="arrows" viewBox="0 0 14 16"><path d="M.5.5h13v15H.5ZM1 8h12" fill="#f2f2f2" stroke="#b5b5b5"/><path d="m4 6 3-3 3 3ZM4 10l3 3 3-3Z"/></svg></div>
  <svg class="cb" viewBox="0 0 13 13"><path d="M.5.5h12v12H.5Z" fill="#fff" stroke="#333"/><path d="m3 6.500 2.500 3 4.500-6" fill="none" stroke="#333" stroke-width="1.200"/></svg><span class="lab l5">Отрисовка</span>
  <svg class="si"><use href="#crs"/></svg><span class="lab l6">EPSG:32637</span><svg class="si"><use href="#msg"/></svg>
</footer>
<script src="dem.js"></script>
</body>
</html>
```
FILE: styles.css
```css
* { box-sizing: border-box; }
body { margin: 0; width: 1600px; height: 870px; overflow: hidden; background: #efefef; color: #000; font: 12px/16px "Noto Sans", "Open Sans", sans-serif; letter-spacing: -.38px; display: flex; flex-direction: column; white-space: nowrap; }
svg { display: block; flex: none; }
svg text { letter-spacing: 0; }
i { font-style: normal; flex: none; }
.defs { display: none; }
.titlebar { height: 24px; background: #fff; display: flex; align-items: center; flex: none; padding: 0 20px 0 2px; }
.logo { width: 17px; height: 17px; margin: -2px 4px 0 0; }
.title { flex: 1; margin-top: 1px; letter-spacing: .25px; }
.wctl { width: 112px; height: 12px; margin: -4px -11px 0 0; }
.menubar { height: 20px; background: #fff; display: flex; padding: 2px 0 0 8px; gap: 16px; flex: none; border-bottom: 1px solid #e8e8e8; }

.row { height: 34px; display: flex; border-top: 1px solid #fff; border-bottom: 1px solid #b2b2b2; }
.tb { display: flex; align-items: center; border-right: 1px solid #adadad; padding-right: 0; box-shadow: 1px 0 #fff; }
.tb.last { border: 0; box-shadow: none; }
.grip { width: 10px; height: 27px; background: radial-gradient(circle at 1px 1px, #bdbdbd 1.1px, transparent 1.3px) 4px 1px / 10px 4px; }
.tb .i { width: 31px; height: 29px; padding: 2px 4px 3px 3px; }
.tb .on { background: #bfdcf3; outline: 1px solid #92c6f0; outline-offset: -1px; }
.off { opacity: .33; filter: grayscale(.6); }
.blue { color: #6b92c2; }
.d { width: 12px; height: 29px; color: #111; }
.d.dim { color: #666; }
.sep { width: 6px; height: 24px; background: linear-gradient(#c8c8c8, #c8c8c8) 3px 0 / 1px 100% no-repeat; }
.t1 { width: 198px; }
.t2 { width: 396px; }
.t4 { width: 594px; }
.row .tb + .tb { padding-right: 1px; }

.spin, .combo { background: #fff; border: 1px solid #7a7a7a; height: 20px; display: flex; align-items: center; justify-content: space-between; padding: 0 1px 0 3px; }
.arrows { width: 14px; height: 16px; }
.tol { width: 77px; height: 18px; }
.combo { background: #e1e1e1; border-color: #adadad; width: 85px; padding-right: 3px; }
.combo svg { width: 10px; height: 6px; }
.tol span, .unit span { padding-top: 2px; letter-spacing: 0; }

.work { display: flex; height: 697px; flex: none; }
.side { width: 34px; display: flex; flex-direction: column; align-items: center; border-bottom: 1px solid #c5c5c5; border-right: 1px solid #c5c5c5; }
.side svg { width: 24px; height: 24px; margin-bottom: 6px; }
.hgrip { width: 27px; height: 3px; margin: 3px 0 6px; background: radial-gradient(circle at 1px 1px, #c3c3c3 1px, transparent 1.3px) 0 0 / 4px 4px; }
.hsep { width: 25px; height: 1px; background: #c5c5c5; margin: 0 0 7px; }
.panel { display: flex; flex-direction: column; padding-top: 1px; }
.layers { width: 292px; margin-left: 1px; }
.ptitle { height: 25px; background: #d9d9d9; border: 1px solid #b5b5b5; display: flex; align-items: center; gap: 6px; padding: 0 4px; flex: none; }
.ptitle span { flex: 1; padding-top: 5px; letter-spacing: -.15px; }
.ptitle svg { width: 14px; height: 14px; }
.ptools { height: 28px; display: flex; align-items: center; gap: 7px; padding: 2px 0 0 5px; flex: none; }
.ptools svg { width: 16px; height: 16px; }
.ptools .small { width: 12px; margin: 0 -3px 0 -4px; height: 29px; }
.ptools .sep { height: 16px; margin: 0 -4px 0 -3px; }
.tree { flex: 1; background: #fff; border: 1px solid #828790; }
.layer { height: 20px; display: flex; align-items: center; padding-left: 4px; }
.tw { width: 10px; height: 6px; }
.cb { width: 13px; height: 13px; }
.layer .cb { margin: 1px 5px 0 9px; }
.focus { flex: 1; height: 20px; border: 1px dotted #000; margin-right: 1px; display: flex; align-items: center; padding-left: 2px; border-right: 2px solid #ccc; }
.ras { width: 14px; height: 14px; margin-right: 6px; }
.focus b { text-decoration: underline; padding-top: 2px; }
.leg { height: 20px; display: flex; align-items: center; padding-left: 43px; gap: 6px; }
.leg i { width: 16px; height: 16px; }
.leg span { padding-top: 2px; }
.leg .black { background: #000; }
.map { width: 931px; margin-left: 4px; background: #fff; border: 1px solid #828790; }
.dem { display: block; margin: 21px 0 0 321px; clip-path: polygon(18px 0, 60px 1px, 100px 3px, 287px 4px, 287px 658px, 190px 657px, 50px 655px, 0 654px); }
.tools { width: 334px; margin-left: 4px; }
.find { height: 20px; background: #fff; border: 1px solid #7a7a7a; display: flex; align-items: center; padding-left: 7px; gap: 7px; color: #808080; }
.find span { padding-top: 2px; }
.find svg { width: 13px; height: 13px; }
.algs { flex: 1; margin: 0; padding: 1px 0 0 5px; list-style: none; background: #fff; border: 1px solid #828790; }
.algs li { height: 20px; display: flex; align-items: center; }
.algs .c { width: 10px; height: 10px; margin: 0 8px 0 0; }
.algs svg { width: 16px; height: 16px; margin-right: 6px; }

.status { height: 27px; display: flex; align-items: center; font-size: 11px; padding: 0 7px 0 4px; }
.status > * { flex: none; }
.status .lab, .status .spin span, .msgtext { padding-top: 2px; }
.locate { width: 200px; margin-right: 8px; font-size: 11.500px; letter-spacing: -.45px; }
.msgtext { width: 552px; letter-spacing: -.65px; font-size: 11.500px; }
.lab { overflow: visible; letter-spacing: -.4px; }
.l1 { width: 57px; } .f1 { width: 97px; padding-left: 6px; letter-spacing: -.2px; }
.si { width: 16px; height: 16px; margin-left: 3px; }
.l2 { width: 49px; margin-left: 12px; } .f2 { width: 78px; letter-spacing: -.15px; }
.cv { width: 10px; height: 6px; margin-right: 3px; }
.lk { margin-left: 10px; width: 14px; }
.l3 { width: 48px; margin-left: 7px; } .f3 { width: 82px; }
.l4 { width: 61px; margin-left: 8px; } .f4 { width: 80px; margin-right: 6px; }
.l5 { width: 69px; margin-left: 5px; letter-spacing: -.2px; }
.l6 { width: 74px; margin-left: 3px; letter-spacing: -.25px; }
```
FILE: dem.js
```js
// Elevation raster: drainage network grown from the main channels.
(function () {
  var canvas = document.getElementById('dem'), W = canvas.width, H = canvas.height, N = W * H;
  var seed = 20177;
  function rnd() { seed = (seed * 1664525 + 1013904223) >>> 0; return seed / 4294967296; }

  // [strength at mouth, strength at head, radius, x, y, x, y, ...] in thirds of a pixel
  var rivers = [
    [1, 1, 4, 410,460,430,510,440,545,440,620,425,680,405,740,395,815,420,860,395,920,395,980,405,1050,415,1090,440,1150,480,1200,520,1235,505,1285,490,1330,420,1390,370,1440,330,1510,320,1580,340,1660,300,1730,290,1790,270,1840,285,1890,230,1920,270,2000],
    [.9,.5,2, 410,460,340,430,270,375,210,345,160,340],
    [.9,.5,2.5, 450,540,500,500,550,440,560,380],
    [.9,.4,2, 410,460,440,400,450,350],
    [.7,.2,1, 385,430,350,390,310,345], [.7,.2,1, 380,520,320,525,260,545,220,540],
    [1,1,4, 900,695,790,690,700,655,640,650], [.8,.5,3, 640,650,520,630,470,600,440,560],
    [.8,.4,1, 690,640,690,560,710,500], [.9,.5,2, 900,610,860,550,770,480],
    [.9,.5,2, 900,265,860,250,770,210,690,180,640,150], [1,.5,2.5, 900,270,870,330,800,360,720,385,650,380,620,340],
    [.7,.4,1, 870,340,870,420], [.5,.3,1.5, 215,60,220,150,180,220,125,265,135,310], [.5,.3,1.5, 385,60,385,170,290,210,240,270],
    [.5,.3,1.5, 545,60,560,180,550,260,555,300,520,340], [.4,.2,1, 385,170,425,240],
    [.6,.3,2, 80,470,145,470,185,490,195,560], [.9,.3,1.5, 70,1010,90,940,150,850,185,760,195,680], [.8,.3,1, 75,880,100,780,160,700],
    [.9,.4,1.5, 65,1090,120,1060,180,1020,290,980], [.7,.3,1, 180,1030,190,960,230,920], [.9,.4,2, 60,1170,150,1130,230,1105,290,1115,370,1150],
    [.9,.5,1.5, 395,815,340,840,300,860,250,855], [.8,.5,1, 430,870,470,885,500,870],
    [.8,.3,1, 420,700,330,660,240,630], [.8,.3,1, 410,720,320,715,230,670], [.8,.3,1, 400,745,300,760,240,750], [.8,.3,1, 440,620,370,600,320,580],
    [1,.6,3, 900,855,860,880,840,940,790,960,730,950,685,930], [1,.4,2, 685,930,680,880,620,830,560,800,500,770],
    [.9,.5,2, 685,930,620,970,560,995,470,1000], [.8,.3,1.5, 860,870,800,855,740,790,700,750],
    [.9,.4,3, 520,1235,580,1185,640,1180,655,1110,700,1070], [.8,.4,1.5, 590,1180,600,1090,640,1040],
    [.9,.4,2, 900,1165,820,1125,760,1060,740,1040], [.9,.4,2, 515,1250,450,1270,360,1280,330,1220],
    [.8,.4,2, 520,1260,600,1300,700,1260,750,1240], [.8,.3,2, 500,1325,550,1345,620,1430,700,1470], [.7,.3,1.2, 560,1345,620,1330,700,1370],
    [1,.7,3.5, 900,1560,870,1500,860,1440,865,1320,850,1250], [.9,.5,1.5, 860,1460,780,1480,700,1450], [.9,.4,1.5, 860,1420,790,1380,750,1320],
    [1,.5,5, 600,2020,560,1960,550,1880,535,1760,540,1680,550,1630], [.8,.3,1.5, 550,1630,500,1560,480,1500], [.8,.3,1.5, 550,1630,640,1590,670,1550], [.8,.3,1, 550,1630,570,1530],
    [.9,.4,1.5, 540,1740,620,1720,680,1660], [.9,.4,2.5, 700,2020,720,1920,720,1870,690,1800,670,1720,720,1680], [.8,.3,1, 720,1890,630,1810],
    [.9,.3,2.5, 450,2020,460,1920,480,1820,440,1730], [1,.4,3.5, 880,2010,860,1930,865,1820,820,1720,780,1640,770,1560], [.8,.4,1.5, 830,1720,835,1600],
    [1,1,8, 900,1750,888,1800,885,1950,895,2010], [.8,.3,1, 330,2010,350,1920,400,1870],
    [1,.4,1.5, 45,1890,100,1920,155,1920,165,1850,185,1720,200,1690], [1,.8,4, 165,1880,200,1930,230,1920], [1,.9,7, 230,1925,300,1990], [.8,.4,1, 240,1890,230,1830],
    [.7,.4,1.5, 50,1650,100,1650,200,1600], [.8,.8,8, 55,1775,95,1782], [.8,.3,1.5, 55,1470,120,1530,165,1500,200,1340,260,1280], [.7,.3,1.2, 60,1350,100,1350,130,1290],
    [.9,.3,1.5, 350,1460,350,1370,320,1290], [.8,.3,1.2, 350,1460,290,1430,260,1350], [.9,.4,1.2, 330,1680,240,1670], [.9,.4,1, 320,1600,250,1570]
  ];

  var start = new Float32Array(N).fill(-1);
  function stamp(x, y, r, h) {
    for (var j = Math.floor(y - r); j <= y + r; j++) for (var i = Math.floor(x - r); i <= x + r; i++) {
      if (i < 0 || j < 0 || i >= W || j >= H) continue;
      var d = Math.hypot(i - x, j - y); if (d > r + .4) continue;
      var k = j * W + i; if (start[k] < 0 || start[k] > h) start[k] = h;
    }
  }
  rivers.forEach(function (r) {
    var pts = [];
    for (var i = 3; i < r.length; i += 2) pts.push([(r[i] - 39) / 3, (r[i + 1] - 54) / 3]);
    for (var pass = 0; pass < 4; pass++) {
      var out = [pts[0]];
      for (i = 1; i < pts.length; i++) {
        var a = pts[i - 1], b = pts[i], L = Math.hypot(a[0] - b[0], a[1] - b[1]) * .25;
        out.push([(a[0] + b[0]) / 2 + (rnd() - .5) * L, (a[1] + b[1]) / 2 + (rnd() - .5) * L], b);
      }
      pts = out;
    }
    for (i = 1; i < pts.length; i++) for (var s = 0; s < 1; s += .25) {
      var t = (i - 1 + s) / (pts.length - 1), st = r[0] + (r[1] - r[0]) * t;
      stamp(pts[i - 1][0] + (pts[i][0] - pts[i - 1][0]) * s, pts[i - 1][1] + (pts[i][1] - pts[i - 1][1]) * s, Math.max(.3, r[2] * (1 - .6 * t * (r[0] > r[1])) * .42), (1 - st) * 2.6);
    }
  });

  // smooth noise makes tributaries wander and converge
  function field(step) {
    var gw = Math.ceil(W / step) + 2, gh = Math.ceil(H / step) + 2, g = [], f = new Float32Array(N);
    for (var i = 0; i < gw * gh; i++) g.push(rnd());
    for (var k = 0; k < N; k++) {
      var x = (k % W) / step, y = Math.floor(k / W) / step, xi = Math.floor(x), yi = Math.floor(y), fx = x - xi, fy = y - yi, o = yi * gw + xi;
      f[k] = (g[o] * (1 - fx) + g[o + 1] * fx) * (1 - fy) + (g[o + gw] * (1 - fx) + g[o + gw + 1] * fx) * fy;
    }
    return f;
  }
  var n1 = field(3), n2 = field(8), n3 = field(34);

  // least-cost tree outward from the channels
  var cost = new Float32Array(N).fill(1e9), par = new Int32Array(N).fill(-1), rough = new Float32Array(N), done = new Uint8Array(N), order = [];
  for (var k = 0; k < N; k++) rough[k] = .12 + rnd() * rnd() * 1.1 + n1[k] * n1[k] * 4.2 + n2[k] * n2[k] * 1.4;
  var buckets = [], Q = 4;
  function push(k, c) { var b = Math.floor(c * Q); (buckets[b] || (buckets[b] = [])).push(k); }
  for (k = 0; k < N; k++) if (start[k] >= 0) { cost[k] = start[k]; push(k, cost[k]); }
  for (var b = 0; b < buckets.length; b++) {
    if (!buckets[b]) continue;
    for (var q = 0; q < buckets[b].length; q++) {
      k = buckets[b][q]; if (done[k]) continue; done[k] = 1; order.push(k);
      var x = k % W, y = (k - x) / W;
      for (var dy = -1; dy < 2; dy++) for (var dx = -1; dx < 2; dx++) {
        var nx = x + dx, ny = y + dy; if (nx < 0 || ny < 0 || nx >= W || ny >= H) continue;
        var n = ny * W + nx; if (done[n]) continue;
        var c = cost[k] + rough[n] * (dx && dy ? 1.41 : 1);
        if (c < cost[n]) { cost[n] = c; par[n] = k; push(n, c); }
      }
    }
  }
  var acc = new Float32Array(N).fill(1);
  for (q = order.length - 1; q >= 0; q--) if (par[order[q]] >= 0) acc[par[order[q]]] += acc[order[q]];
  var h = new Float32Array(N);
  order.forEach(function (k) { h[k] = par[k] < 0 ? start[k] : h[par[k]] + Math.min(1.3, 2.5 / Math.pow(acc[k], .85)); });

  var ctx = canvas.getContext('2d'), img = ctx.createImageData(W, H);
  for (k = 0; k < N; k++) {
    x = k % W; y = (k - x) / W;
    var e = h[k];
    if (x && y && x < W - 1 && y < H - 1) e = e * .65 + (h[k - 1] + h[k + 1] + h[k - W] + h[k + W]) * .0875;
    var f = y / H, lo = 128 - 24 * f, hi = 246 - 32 * f + (n3[k] - .5) * 14;
    hi += 6 * Math.exp(-(Math.pow((x - 20) / 45, 2) + Math.pow((y - 190) / 60, 2)));
    var v = lo + (hi - lo) * (.74 * (1 - Math.exp(-e / 2.7)) + .26 * (1 - Math.exp(-cost[k] / 16)));
    v += (f < .25 ? (.25 - f) * 170 * (1 - (v - lo) / (hi - lo)) : 0);
    img.data[k * 4] = img.data[k * 4 + 1] = img.data[k * 4 + 2] = v; img.data[k * 4 + 3] = 255;
  }
  ctx.putImageData(img, 0, 0);
  // two quarry pits and the spoil around them
  ctx.fillStyle = '#d2d2d2'; ctx.beginPath(); ctx.ellipse(98, 168, 10, 6, -.3, 0, 7); ctx.fill();
  ctx.fillStyle = '#ececec'; ctx.beginPath(); ctx.arc(111, 164, 4, 0, 7); ctx.arc(108, 157, 2, 0, 7); ctx.fill();
  ctx.fillStyle = '#222'; ctx.fillRect(97, 156, 4, 4); ctx.fillRect(100, 156, 2, 2); ctx.fillRect(97, 160, 2, 2); ctx.fillRect(111, 162, 3, 3);
})();
```
